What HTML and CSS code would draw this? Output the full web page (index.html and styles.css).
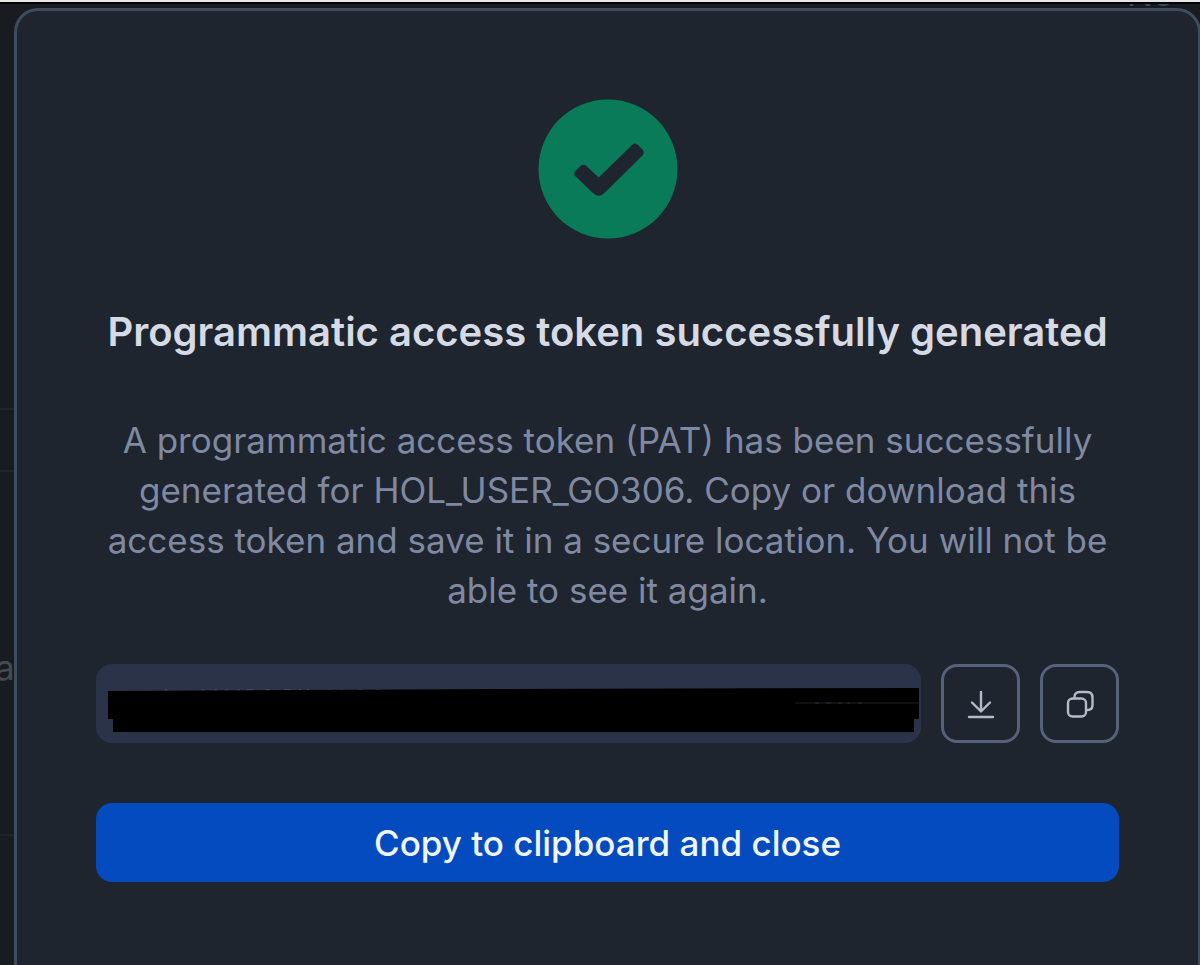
FILE: index.html
```html
<!DOCTYPE html>
<html lang="en">
<head>
<meta charset="utf-8">
<title>Programmatic access token</title>
<link rel="stylesheet" href="styles.css">
</head>
<body>
<div class="backdrop" aria-hidden="true">
  <span class="rule rule-first"></span>
  <span class="rule rule-second"></span>
  <span class="rule rule-third"></span>
  <span class="behind behind-top">No</span>
  <span class="behind behind-left">a</span>
  <span class="window-edge"></span>
</div>
<main class="dialog" role="dialog" aria-labelledby="dialog-title" aria-describedby="dialog-text">
  <svg class="status" viewBox="0 0 140 140" aria-hidden="true">
    <circle cx="70" cy="70" r="69.5" fill="#097b59"/>
    <path d="M37.2 72.2 42.8 66.8Q45.5 64.500 48.2 66.8L60.7 78.600 94 46Q97 43 100 46L104.700 50.700Q107 53.500 104.700 56.200L67 93.500Q60.700 100 54.400 93.500L37.200 77Q35 74.600 37.200 72.200Z" fill="#1e252f"/>
  </svg>
  <h1 class="title" id="dialog-title">Programmatic access token successfully generated</h1>
  <p class="text" id="dialog-text">A programmatic access token (PAT) has been successfully generated for HOL_USER_GO306. Copy or download this access token and save it in a secure location. You will not be able to see it again.</p>
  <div class="token-row">
    <div class="token">
      <input class="token-input" type="text" readonly aria-label="Access token">
      <svg class="redaction" viewBox="0 0 826 79" preserveAspectRatio="none" aria-hidden="true">
        <path d="M69 26h2M106 26h2M119 26h2M130 26h2M142 26h2M151 26h7M170 26h4M188 26h7M203 26h2M211 26h2M233 26h2M245 26h2M262 26h5M280 26h4" stroke="#59627a" stroke-width="1"/>
        <path d="M12 27 400 25 824 24V55H819V68H17V55H12Z" fill="#000"/>
        <path d="M700 39H824" stroke="#1b1e29" stroke-width="1"/>
        <path d="M720 39h4M731 39h5M743 39h4M752 39h3M763 39h4" stroke="#2c2f38" stroke-width="1"/>
      </svg>
    </div>
    <button class="icon-button" type="button" aria-label="Download token">
      <svg class="icon" viewBox="0 0 40 40" fill="none" stroke="currentColor" stroke-width="2.4" stroke-linecap="round" stroke-linejoin="round">
        <path d="M20 8V27M11 18.5 20 27.5 29 18.500M8 33H32"/>
      </svg>
    </button>
    <button class="icon-button" type="button" aria-label="Copy token">
      <svg class="icon" viewBox="0 0 40 40" fill="none" stroke="currentColor" stroke-width="2.4" stroke-linejoin="round">
        <rect x="8" y="14.5" width="18" height="18" rx="4.5"/>
        <path d="M14.5 14.5V13Q14.5 8 19.5 8H27Q32.500 8 32.500 13.500V21Q32.500 26 27.500 26H26"/>
      </svg>
    </button>
  </div>
  <button class="primary" type="button">Copy to clipboard and close</button>
</main>
</body>
</html>
```
FILE: styles.css
```css
* {
  box-sizing: border-box;
}

body {
  margin: 0;
  min-height: 100vh;
  overflow: hidden;
  background: #181c20;
  font-family: Inter, "Liberation Sans", sans-serif;
}

.backdrop {
  position: absolute;
  inset: 0;
  overflow: hidden;
}

.window-edge {
  position: absolute;
  inset: 0 0 auto;
  height: 4px;
  border-top: 2px solid #e4e8e5;
  border-bottom: 2px solid #030405;
}

.rule {
  position: absolute;
  left: 0;
  width: 14px;
  height: 2px;
  background: #20242b;
}

.rule-first { top: 408px; }
.rule-second { top: 470px; }
.rule-third { top: 834px; }

.behind {
  position: absolute;
  color: #454a50;
  font-size: 35px;
  line-height: 40px;
}

.behind-top {
  top: -27px;
  right: 26px;
}

.behind-left {
  top: 647px;
  left: -5px;
}

.dialog {
  position: relative;
  display: flex;
  flex-direction: column;
  align-items: center;
  min-height: 100vh;
  margin: 8px -1px 0 14px;
  padding: 88px 79px;
  border: 3px solid #414b5e;
  border-bottom: 0;
  border-radius: 24px 24px 0 0;
  background: #1e252f;
}

.status {
  width: 140px;
  height: 140px;
}

.title {
  margin: 68px 0 58px;
  color: #d5dae4;
  font-size: 40px;
  font-weight: 600;
  line-height: 50px;
  text-align: center;
}

.text {
  margin: 0 0 49px;
  color: #8089a2;
  font-size: 35px;
  line-height: 50px;
  text-align: center;
}

.token-row {
  display: flex;
  gap: 20px;
  width: 100%;
  margin-bottom: 60px;
}

.token {
  position: relative;
  flex: 1;
  height: 79px;
}

.token-input {
  width: 100%;
  height: 100%;
  padding: 0 20px;
  border: 0;
  border-radius: 16px;
  background: #2b3348;
  color: #d5dae4;
  font: inherit;
  font-size: 35px;
}

.redaction {
  position: absolute;
  inset: 0;
  width: 100%;
  height: 100%;
  pointer-events: none;
}

.icon-button {
  display: flex;
  align-items: center;
  justify-content: center;
  width: 79px;
  height: 79px;
  padding: 0;
  border: 3px solid #56617a;
  border-radius: 16px;
  background: transparent;
  color: #b4bac8;
}

.icon {
  width: 40px;
  height: 40px;
}

.primary {
  width: 100%;
  height: 79px;
  border: 0;
  border-radius: 16px;
  background: #044bbf;
  color: #f0f4fb;
  font: inherit;
  font-size: 35px;
  font-weight: 500;
}
```
